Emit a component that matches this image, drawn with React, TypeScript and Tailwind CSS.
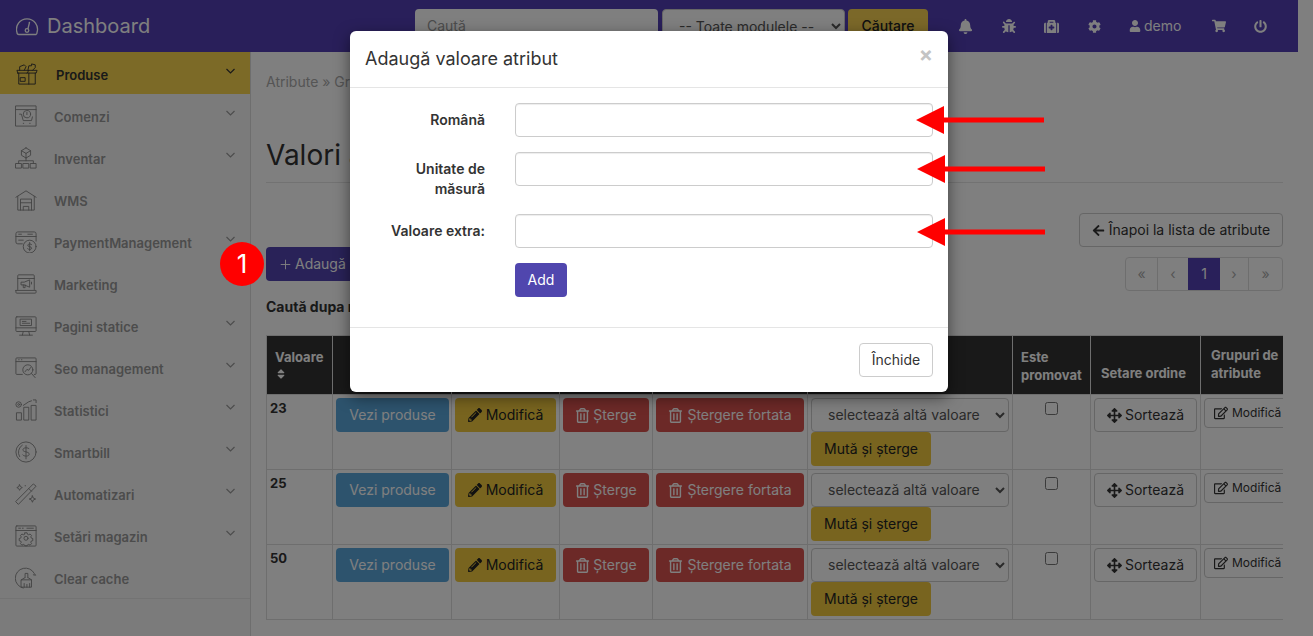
import type { ReactNode } from "react";
import { Plus } from "lucide-react";
import {
  FaArrowLeft,
  FaArrowsAlt,
  FaBell,
  FaBug,
  FaCog,
  FaMedkit,
  FaPencilAlt,
  FaPowerOff,
  FaRegEdit,
  FaRegTrashAlt,
  FaShoppingCart,
  FaSort,
  FaUser,
} from "react-icons/fa";

const Ico = ({ children }: { children: ReactNode }) => (
  <svg width="22" height="22" viewBox="0 0 24 24" fill="none" stroke="currentColor" strokeWidth="1" strokeLinecap="round" strokeLinejoin="round" className="mt-[2px] shrink-0">
    {children}
  </svg>
);

const sidebarItems: { label: string; arrow: boolean; icon: ReactNode }[] = [
  {
    label: "Produse",
    arrow: true,
    icon: (
      <>
        <path d="M2 11h20l1-3H1l1 3zM3 11v12h18V11M14 11v12M14 8l-2 3M5 16h5v4H5z" />
        <path d="M4 8V4l5-2 2 2-2 4M13 8l1-5h3v-2l4 1v3l-3 3" />
      </>
    ),
  },
  {
    label: "Comenzi",
    arrow: true,
    icon: (
      <>
        <rect x="1" y="1" width="22" height="22" />
        <path d="M1 5h22M5 10h2l2 7h9l1-4M9 20h.5M16 20h.5" />
        <circle cx="13" cy="10" r="4" />
        <path d="M13 8v2.5" />
      </>
    ),
  },
  {
    label: "Inventar",
    arrow: true,
    icon: (
      <>
        <path d="M12 1l5 3v5l-5 3-5-3V4l5-3zM7 4l5 3 5-3M12 7v5M12 12v3M4 18v-3h16v3" />
        <path d="M1 18h6v5H1zM9 18h6v5H9zM17 18h6v5h-6z" />
      </>
    ),
  },
  {
    label: "WMS",
    arrow: false,
    icon: <path d="M1 9l11-7 11 7M3 8v15h18V8M6 23V11h12v12M6 15h12M9 23v-4h6v4" />,
  },
  {
    label: "PaymentManagement",
    arrow: true,
    icon: (
      <>
        <path d="M8 14H3a2 2 0 0 1-2-2V3a2 2 0 0 1 2-2h18a2 2 0 0 1 2 2v8M1 6h22M4 10h5M4 3.5h3M14 3.5h5" />
        <circle cx="16" cy="17" r="7" />
        <path d="M18.2 14.8c-.5-.8-3.8-1.3-4.3.6-.5 2.2 4.4 1.2 4.3 3.4-.1 1.7-3.6 1.7-4.5.5M16 12.5v9" />
      </>
    ),
  },
  {
    label: "Marketing",
    arrow: false,
    icon: (
      <>
        <path d="M3 18V3a1 1 0 0 1 1-1h16a1 1 0 0 1 1 1v15M1 19h22v2a1 1 0 0 1-1 1H2a1 1 0 0 1-1-1v-2zM3 6h18" />
        <path d="M7 10h3l6-2.5v8L10 13H7zM9 13v3h2v-3M18 10v2" />
      </>
    ),
  },
  {
    label: "Pagini statice",
    arrow: true,
    icon: (
      <>
        <rect x="1" y="2" width="22" height="16" rx="1" />
        <path d="M1 14h22M9 18l-1 4M15 18l1 4M5 22h14" />
        <path d="M6 4.5h12v7H6zM8 7h4M8 9h8" />
      </>
    ),
  },
  {
    label: "Seo management",
    arrow: true,
    icon: (
      <>
        <path d="M8 19H2a1 1 0 0 1-1-1V2a1 1 0 0 1 1-1h20a1 1 0 0 1 1 1v16a1 1 0 0 1-1 1h-1M1 5h22M4 3h.5M7 3h.5" />
        <circle cx="14" cy="14" r="5.5" />
        <path d="M18 18l4 4.5M11 16l2-2.5 2 1 2-3" />
      </>
    ),
  },
  {
    label: "Statistici",
    arrow: true,
    icon: (
      <>
        <circle cx="4" cy="6" r="3" />
        <circle cx="4" cy="6" r="1" />
        <path d="M2 15h5v8H2zM10 9h5v14h-5zM18 7h5v16h-5zM9 7l6-4 3-1M20 1h3v3" />
      </>
    ),
  },
  {
    label: "Smartbill",
    arrow: true,
    icon: (
      <>
        <circle cx="12" cy="12" r="11" />
        <path d="M5 17a9 9 0 0 1 3-12.5" />
        <path d="M15.5 8.5c-.8-1.3-6-2-6.8.8-.7 3.3 7 1.8 6.8 5.2-.2 2.6-5.7 2.6-7 .7M12 5v14.5" />
      </>
    ),
  },
  {
    label: "Automatizari",
    arrow: true,
    icon: (
      <>
        <path d="M1 20L20 1l3 2.5L4 23z" />
        <path d="M15 6l3 3" />
        <path d="M5 2l1 2 2 1-2 1-1 2-1-2-2-1 2-1zM11 3h.5M19 14l1 2.5 2.5 1-2.5 1-1 2.5-1-2.5-2.5-1 2.5-1z" />
      </>
    ),
  },
  {
    label: "Setări magazin",
    arrow: true,
    icon: (
      <>
        <rect x="1" y="1" width="22" height="22" rx="1" />
        <path d="M1 6h22M4 3.5h2M8 3.5h1M13 3.5h7" />
        <circle cx="12" cy="14.500" r="2.200" />
        <path d="M10.800 8.500h2.400l.4 1.600 1.400.6 1.400-.9 1.700 1.700-.9 1.400.6 1.400 1.600.4v2.400l-1.600.4-.6 1.400.9 1.400-1.700 1.700-1.400-.9-1.400.6-.4 1h-2.400l-.4-1-1.400-.6-1.400.9-1.700-1.700.9-1.400-.6-1.400-1.600-.4v-2.400l1.600-.4.6-1.400-.9-1.400 1.700-1.700 1.400.9 1.400-.6z" />
      </>
    ),
  },
  {
    label: "Clear cache",
    arrow: false,
    icon: (
      <>
        <path d="M9 23A11 11 0 0 1 9 1.500a11 11 0 0 1 12 5.500l1.500 2-2.500-.5" />
        <path d="M7 14h11v8H7zM7 14l3-2h1V7h3v5h1l3 2M10 22v-4M13 22v-3M16 22v-4" />
      </>
    ),
  },
];

const rows = ["23", "25", "50"];

const Arrow = ({ top, tip, end }: { top: number; tip: number; end: number }) => (
  <svg className="absolute" style={{ top: top - 15, left: tip }} width={end - tip} height="30" viewBox={`0 0 ${end - tip} 30`}>
    <path d={`M0 15L28 1v11.500h${end - tip - 28}v5H28V29z`} fill="#ff0000" />
  </svg>
);

export default function App() {
  return (
    <div className="relative h-screen w-full overflow-hidden bg-white text-sm text-[#333] font-['Inter','Noto_Sans',sans-serif]">
      <div className="w-[1298px]">
        {/* Top bar */}
        <header className="flex h-[52px] items-start bg-[#523fb5] pt-[9px] text-white">
          <div className="flex h-[34px] w-[415px] shrink-0 items-center pl-[16px]">
            <svg width="23" height="19" viewBox="0 0 23 19" fill="none" stroke="currentColor" strokeWidth="1.300" strokeLinecap="round">
              <path d="M3 17.500h17a2 2 0 0 0 1-2 10.500 10.500 0 1 0-20 0 2 2 0 0 0 2 2z" />
              <circle cx="11" cy="13.500" r="1.800" />
              <path d="M12 11.500l1.500-6" />
            </svg>
            <span className="ml-[8px] text-xl leading-none">Dashboard</span>
          </div>
          <div className="flex h-[34px] w-[243px] items-center rounded bg-white px-3 text-[#999]">Caută</div>
          <select className="ml-[4px] h-[34px] w-[183px] rounded border border-[#ccc] bg-white pl-3 text-[#555]">
            <option>-- Toate modulele --</option>
          </select>
          <button className="ml-[3px] h-[34px] w-[80px] rounded bg-[#f6d153] font-medium text-[#222]">Căutare</button>
          <div className="ml-[16px] flex h-[34px] items-center">
            <span className="flex w-[43px] justify-center"><FaBell size={15} /></span>
            <span className="flex w-[43px] justify-center"><FaBug size={14} /></span>
            <span className="flex w-[43px] justify-center"><FaMedkit size={15} /></span>
            <span className="flex w-[43px] justify-center"><FaCog size={13} /></span>
            <span className="flex w-[81px] items-center gap-[3px] pl-[13px]"><FaUser size={12} />demo</span>
            <span className="flex w-[43px] justify-center"><FaShoppingCart size={14} /></span>
            <span className="flex w-[41px] justify-center"><FaPowerOff size={13} /></span>
          </div>
        </header>

        <div className="flex h-[584px]">
          {/* Sidebar */}
          <aside className="w-[251px] shrink-0 border-r border-[#ddd] bg-[#f7f7f7]">
            <nav className="border-b border-[#e7e7e7]">
              {sidebarItems.map((item, i) => (
                <div
                  key={item.label}
                  className={`flex h-[42px] items-center pr-[15px] text-[13px] font-semibold ${i === 0 ? "bg-[#f9d44f] pl-[16px] text-[#333]" : "pl-[15px] text-[#999]"}`}
                >
                  <span className={i === 0 ? "text-[#333]" : "text-[#888]"}><Ico>{item.icon}</Ico></span>
                  <span className={`mt-[5px] ${i === 0 ? "ml-[18px]" : "ml-[17px]"}`}>{item.label}</span>
                  {item.arrow && (
                    <svg className="mb-[5px] ml-auto" width="9" height="6" viewBox="0 0 9 6" fill="none" stroke="currentColor" strokeWidth="1.200">
                      <path d="M.5 1l4 4 4-4" />
                    </svg>
                  )}
                </div>
              ))}
            </nav>
          </aside>

          {/* Main */}
          <main className="w-[1047px] px-[15px]">
            <p className="pt-[20px] leading-5 text-[#aaa]">Atribute » Grupuri de atribute</p>
            <h1 className="mt-[48px] h-[43px] border-b border-[#e5e5e5] text-[28px] leading-[31px] text-[#333]">Valori atribut</h1>
            <div className="mt-[30px] flex justify-between">
              <button className="mt-[34px] flex h-[34px] w-[160px] items-center gap-[2px] self-start rounded bg-[#5245b0] pl-3 text-white">
                <Plus size={15} strokeWidth={1.5} />Adaugă valoare
              </button>
              <div className="flex flex-col items-end">
                <button className="flex h-[34px] w-[204px] items-center justify-center gap-1 rounded border border-[#ccc] bg-white">
                  <FaArrowLeft size={13} /> Înapoi la lista de atribute
                </button>
                <div className="mt-[10px] flex h-[34px] w-[158px] overflow-hidden rounded border border-[#ddd] text-[#aaa]">
                  <span className="flex w-[32px] items-center justify-center border-r border-[#ddd]">«</span>
                  <span className="flex w-[30px] items-center justify-center">‹</span>
                  <span className="flex w-[32px] items-center justify-center bg-[#5240b4] text-white">1</span>
                  <span className="flex w-[29px] items-center justify-center border-r border-[#ddd]">›</span>
                  <span className="flex flex-1 items-center justify-center">»</span>
                </div>
              </div>
            </div>
            <p className="mt-[6px] font-bold leading-5">Caută dupa nume</p>

            <div className="mt-[18px] overflow-hidden">
              <table className="w-[1060px] table-fixed border-collapse">
                <colgroup>
                  <col className="w-[66px]" />
                  <col className="w-[119px]" />
                  <col className="w-[108px]" />
                  <col className="w-[93px]" />
                  <col className="w-[155px]" />
                  <col className="w-[205px]" />
                  <col className="w-[78px]" />
                  <col className="w-[110px]" />
                  <col className="w-[126px]" />
                </colgroup>
                <thead>
                  <tr className="h-[59px] bg-[#333] text-left text-[13px] font-bold leading-[18px] text-white">
                    <th className="border border-[#ddd] pb-[2px] pl-2">Valoare<FaSort size={12} className="mt-[2px] block" /></th>
                    <th className="border border-[#ddd]"></th>
                    <th className="border border-[#ddd]"></th>
                    <th className="border border-[#ddd]"></th>
                    <th className="border border-[#ddd]"></th>
                    <th className="border border-[#ddd]"></th>
                    <th className="border border-[#ddd] pt-[2px] pl-2">Este promovat</th>
                    <th className="border border-[#ddd] pt-[16px] pl-[10px]">Setare ordine</th>
                    <th className="border border-[#ddd] pb-[2px] pl-[10px]">Grupuri de<br />atribute</th>
                  </tr>
                </thead>
                <tbody>
                  {rows.map((v) => (
                    <tr key={v} className="h-[75px] align-top">
                      <td className="border border-[#ddd] px-[3px] pt-[4px] text-[13px] font-bold">{v}</td>
                      <td className="border border-[#ddd] p-[3px]">
                        <button className="h-[34px] w-[113px] rounded bg-[#5ba7db] text-white">Vezi produse</button>
                      </td>
                      <td className="border border-[#ddd] p-[3px]">
                        <button className="flex h-[34px] w-[101px] items-center justify-center gap-1 rounded bg-[#f0c93f] text-[#222]"><FaPencilAlt size={14} />Modifică</button>
                      </td>
                      <td className="border border-[#ddd] p-[3px]">
                        <button className="flex h-[34px] w-[86px] items-center justify-center gap-[3px] rounded bg-[#d9534f] text-white"><FaRegTrashAlt size={15} />Șterge</button>
                      </td>
                      <td className="border border-[#ddd] p-[3px]">
                        <button className="flex h-[34px] w-[148px] items-center justify-center gap-1 rounded bg-[#d9534f] text-white"><FaRegTrashAlt size={15} />Ștergere fortata</button>
                      </td>
                      <td className="border border-[#ddd] p-[3px]">
                        <select className="h-[34px] w-[198px] rounded border border-[#ccc] bg-white pb-[2px] pl-3 text-[#555]">
                          <option>selectează altă valoare</option>
                        </select>
                        <button className="block h-[34px] w-[120px] rounded bg-[#f0c93f] text-[#222]">Mută și șterge</button>
                      </td>
                      <td className="border border-[#ddd] pt-[5px] text-center">
                        <input type="checkbox" className="h-[13px] w-[13px]" />
                      </td>
                      <td className="border border-[#ddd] p-[3px]">
                        <button className="flex h-[34px] w-[103px] items-center justify-center gap-[3px] rounded border border-[#ccc] bg-white"><FaArrowsAlt size={15} />Sortează</button>
                      </td>
                      <td className="border border-[#ddd] p-[3px]">
                        <button className="flex h-[30px] w-[90px] items-center gap-1 rounded border border-[#ccc] bg-white pl-[9px] text-xs"><FaRegEdit size={14} />Modifică</button>
                      </td>
                    </tr>
                  ))}
                </tbody>
              </table>
            </div>
          </main>
        </div>
      </div>

      {/* Backdrop */}
      <div className="absolute inset-0 bg-black/50" />

      <div className="absolute left-[220px] top-[242px] flex h-[44px] w-[44px] items-center justify-center rounded-full bg-[#ff0000] text-[26px] text-white">1</div>

      {/* Modal */}
      <div className="absolute left-[350px] top-[31px] w-[598px] rounded-md bg-white shadow-[0_5px_15px_rgba(0,0,0,0.5)]">
        <div className="flex h-[57px] items-start justify-between border-b border-[#e5e5e5] px-[15px]">
          <h4 className="mt-[16px] text-lg leading-6">Adaugă valoare atribut</h4>
          <span className="mt-[12px] text-[21px] font-bold leading-6 text-[#c4c4c4]">×</span>
        </div>
        <div className="px-[15px] pt-[15px] pb-[30px]">
          <div className="mb-[15px] flex">
            <label className="w-[120px] shrink-0 pt-[7px] text-right font-semibold leading-5">Română</label>
            <input className="ml-[30px] h-[34px] flex-1 rounded border border-[#ccc] shadow-[inset_0_1px_1px_rgba(0,0,0,0.075)]" />
          </div>
          <div className="mb-[15px] flex">
            <label className="w-[120px] shrink-0 pl-[30px] pt-[7px] text-right font-semibold leading-5">Unitate de măsură</label>
            <input className="ml-[30px] h-[34px] flex-1 rounded border border-[#ccc] shadow-[inset_0_1px_1px_rgba(0,0,0,0.075)]" />
          </div>
          <div className="mb-[15px] flex">
            <label className="w-[120px] shrink-0 pt-[7px] text-right font-semibold leading-5">Valoare extra:</label>
            <input className="ml-[30px] h-[34px] flex-1 rounded border border-[#ccc] shadow-[inset_0_1px_1px_rgba(0,0,0,0.075)]" />
          </div>
          <button className="ml-[150px] h-[34px] w-[52px] rounded bg-[#5046ae] text-white">Add</button>
        </div>
        <div className="flex h-[65px] items-center justify-end border-t border-[#e5e5e5] px-[15px]">
          <button className="h-[34px] w-[74px] rounded border border-[#ccc] bg-white">Închide</button>
        </div>
      </div>

      <Arrow top={120} tip={916} end={1044} />
      <Arrow top={169} tip={917} end={1045} />
      <Arrow top={232} tip={917} end={1045} />
    </div>
  );
}
